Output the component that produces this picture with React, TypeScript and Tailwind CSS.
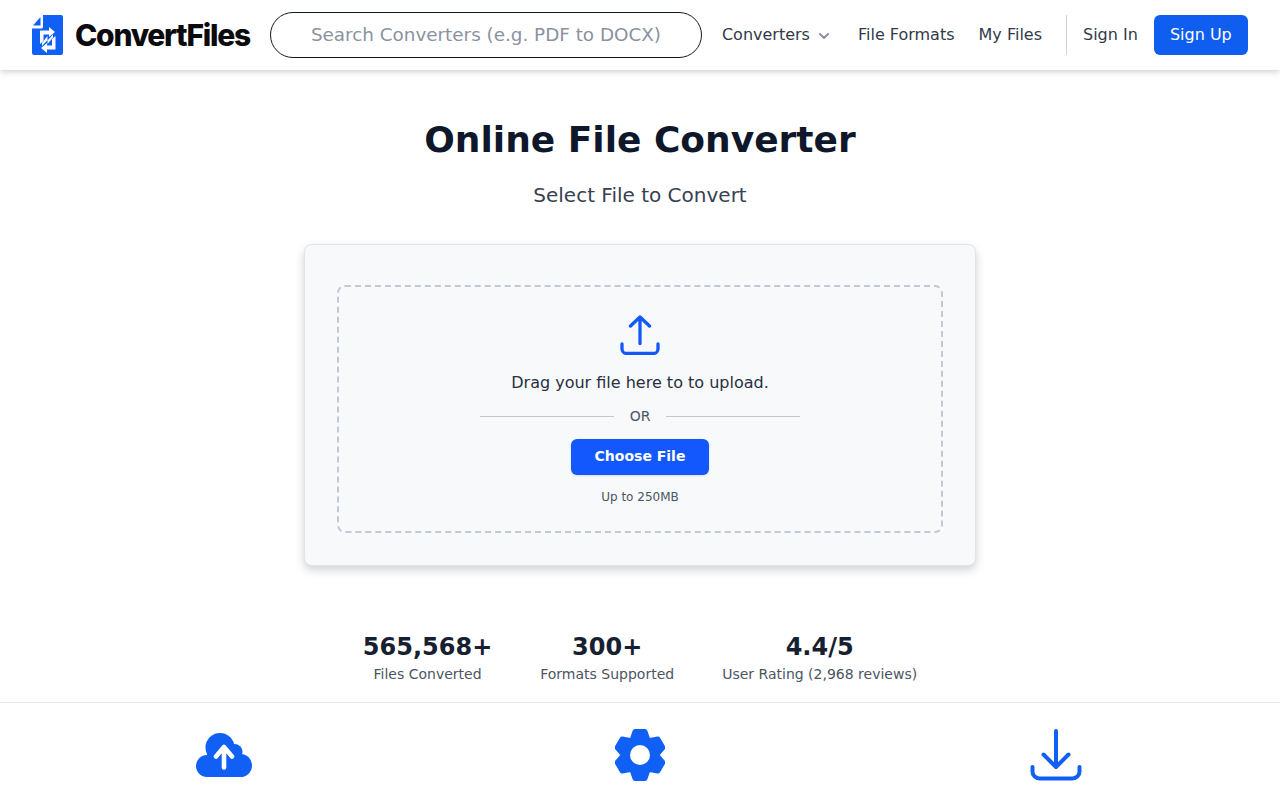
import { ChevronDown } from "lucide-react";

function Logo() {
  return (
    <svg width="32" height="40" viewBox="0 0 32 40" className="shrink-0">
      <path d="M11 0 H29 a2 2 0 0 1 2 2 V38 a2 2 0 0 1 -2 2 H2 a2 2 0 0 1 -2 -2 V13.5 H9.5 a1.5 1.5 0 0 0 1.5 -1.5 Z" fill="#1060f5" />
      <path d="M8.5 2 L1 10.5 H8.5 Z" fill="#1060f5" />
      <path d="M17 12 L23 17 L17 22 V19.5 H11.5 V26 L8 29 V15.5 H17 Z" fill="#fff" />
      <path d="M15 38 L9 33 L15 28 V30.5 H20 V24 L23.5 21 V34.5 H15 Z" fill="#fff" />
      <path d="M10 28 L15.5 21 V25.5 L21 19.5 V22.5 L15.5 29 V25 L10 31 Z" fill="#fff" />
    </svg>
  );
}

function UploadIcon() {
  return (
    <svg width="40" height="40" viewBox="0 0 40 40" fill="none" stroke="#1259f5" strokeWidth="3.3" strokeLinecap="round" strokeLinejoin="round">
      <path d="M20 28.5 V2 M10.5 11 L20 2 L29.5 11" />
      <path d="M2 29 V34 a4.5 4.5 0 0 0 4.5 4.5 H33.5 a4.5 4.5 0 0 0 4.5 -4.5 V29" />
    </svg>
  );
}

function CloudIcon() {
  return (
    <svg width="56" height="44" viewBox="0 0 56 44">
      <g fill="#1060f5">
        <circle cx="24" cy="14.5" r="14.5" />
        <circle cx="38.5" cy="19" r="8" />
        <circle cx="11" cy="33" r="11" />
        <circle cx="44.5" cy="32.5" r="11.5" />
        <rect x="11" y="18" width="33.5" height="26" />
      </g>
      <path d="M28 34.5 V14.5 M20 23.5 L28 14 L36 23.5" fill="none" stroke="#fff" strokeWidth="4.6" strokeLinecap="round" strokeLinejoin="round" />
    </svg>
  );
}

function GearIcon() {
  const teeth = [0, 60, 120, 180, 240, 300];
  return (
    <svg width="50" height="52" viewBox="0 0 50 52">
      {teeth.map((a) => (
        <polygon
          key={a}
          points="20,2.5 30,2.5 34,14 16,14"
          fill="#1060f5"
          stroke="#1060f5"
          strokeWidth="5"
          strokeLinejoin="round"
          transform={`rotate(${a} 25 26)`}
        />
      ))}
      <circle cx="25" cy="26" r="19.5" fill="#1060f5" />
      <circle cx="25" cy="26" r="10" fill="#fff" />
    </svg>
  );
}

function DownloadIcon() {
  return (
    <svg width="54" height="54" viewBox="0 0 54 54" fill="none" stroke="#1060f5" strokeWidth="4" strokeLinecap="round" strokeLinejoin="round">
      <path d="M27 3 V39 M14.5 26.5 L27 39 L39.5 26.5" />
      <path d="M3.5 39 V43.5 a7 7 0 0 0 7 7 H43.5 a7 7 0 0 0 7 -7 V39" />
    </svg>
  );
}

const stats = [
  { value: "565,568+", label: "Files Converted" },
  { value: "300+", label: "Formats Supported" },
  { value: "4.4/5", label: "User Rating (2,968 reviews)" },
];

export default function App() {
  return (
    <div className="h-[800px] overflow-hidden bg-white font-['DejaVu_Sans',sans-serif] text-[#111827]">
      <header className="relative flex h-[70px] items-center bg-white pl-8 pr-8 shadow-[0_2px_6px_rgba(0,0,0,0.18)]">
        <Logo />
        <span className="ml-[11px] font-['Inter',sans-serif] text-[30px] font-extrabold tracking-[-1.25px] text-[#0b0b0f]">ConvertFiles</span>
        <div className="ml-5 flex h-[46px] w-[432px] items-center rounded-full border border-[#111827] pl-10 text-[18.35px] text-[#8a92a0]">
          Search Converters (e.g. PDF to DOCX)
        </div>
        <nav className="ml-5 flex items-center text-base text-[#313a49]">
          <span>Converters</span>
          <ChevronDown className="ml-[6px] mt-[2px] h-[16px] w-[16px] text-[#8a92a0]" strokeWidth={3} />
          <span className="ml-[26px]">File Formats</span>
          <span className="ml-6">My Files</span>
          <div className="ml-6 h-10 w-px bg-[#d1d5db]" />
          <span className="ml-4">Sign In</span>
          <span className="ml-4 flex h-10 w-[94px] items-center justify-center rounded-md bg-[#0f5ef0] text-white">Sign Up</span>
        </nav>
      </header>

      <main className="flex flex-col items-center">
        <h1 className="mt-[46px] text-[36px] font-bold leading-[48px] text-[#0f172a]">Online File Converter</h1>
        <p className="mt-[17px] text-xl leading-7 text-[#374151]">Select File to Convert</p>

        <div className="mt-[35px] w-[672px] rounded-lg border border-[#e2e4e9] bg-[#f8f9fb] px-8 pb-8 pt-10 shadow-[0_4px_10px_rgba(0,0,0,0.18)]">
          <div className="flex h-[248px] flex-col items-center rounded-lg border-2 border-dashed border-[#c3c7d6] pt-7">
            <UploadIcon />
            <p className="mt-4 text-base leading-6 text-[#27303f]">Drag your file here to to upload.</p>
            <div className="mt-[11px] flex w-80 items-center text-sm leading-5 text-[#4b5563]">
              <div className="h-px flex-1 bg-[#c4c7cc]" />
              <span className="mx-4">OR</span>
              <div className="h-px flex-1 bg-[#c4c7cc]" />
            </div>
            <div className="mt-[13px] flex h-9 w-[138px] items-center justify-center rounded-md bg-[#1358fc] pb-[2px] text-sm font-bold text-white shadow-sm">Choose File</div>
            <p className="mt-[14px] text-xs leading-4 text-[#4b5563]">Up to 250MB</p>
          </div>
        </div>

        <div className="mt-[65px] flex gap-12">
          {stats.map((s) => (
            <div key={s.label} className="flex flex-col items-center">
              <div className="text-2xl font-bold leading-8 text-[#162030]">{s.value}</div>
              <div className="mt-px text-sm leading-5 text-[#4b5563]">{s.label}</div>
            </div>
          ))}
        </div>

        <div className="mt-[18px] grid w-full grid-cols-3 border-t border-[#e5e7eb] px-4 pt-[25px]">
          <div className="flex h-[54px] items-center justify-center">
            <CloudIcon />
          </div>
          <div className="flex h-[54px] items-center justify-center">
            <GearIcon />
          </div>
          <div className="flex h-[54px] items-center justify-center">
            <DownloadIcon />
          </div>
        </div>
      </main>
    </div>
  );
}
